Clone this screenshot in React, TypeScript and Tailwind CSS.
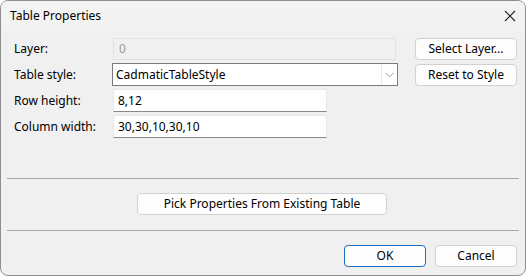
import React from 'react';

function Field({ width, value }: { width: string; value: string }) {
  return (
    <div
      className={`${width} h-[23px] bg-white border border-[#e8e8e8] border-b-[#888888] flex items-center px-[4px]`}
    >
      {value}
    </div>
  );
}

function Button({
  label,
  width,
  primary,
}: {
  label: string;
  width: string;
  primary?: boolean;
}) {
  return (
    <button
      className={`${width} h-[22px] rounded-[4px] bg-[#fdfdfd] border flex items-center justify-center ${
        primary ? 'border-[#1c6fc0]' : 'border-[#d1d1d1]'
      }`}
    >
      {label}
    </button>
  );
}

export default function App() {
  return (
    <div
      className="w-[526px] h-[276px] bg-[#f0f0f0] border border-[#8f8f8f] rounded-[8px] overflow-hidden flex flex-col text-[12px] text-black"
      style={{ fontFamily: '"Noto Sans", "Open Sans", sans-serif' }}
    >
      <div className="h-[30px] bg-[#f3f3f3] flex items-center justify-between pl-[9px] pr-[9px] shrink-0">
        <span>Table Properties</span>
        <svg width="12" height="12" viewBox="0 0 12 12">
          <path d="M1 1L11 11M11 1L1 11" stroke="#222" strokeWidth="1.1" />
        </svg>
      </div>

      <div className="flex flex-col pl-[13px] pt-[7px]">
        <div className="flex items-center h-[22px]">
          <span className="w-[99px]">Layer:</span>
          <div className="w-[283px] h-[22px] bg-[#f0f0f0] border border-[#e2e2e2] flex items-center px-[5px] text-[#9a9a9a]">
            0
          </div>
          <div className="ml-[19px]">
            <Button label="Select Layer..." width="w-[102px]" />
          </div>
        </div>

        <div className="flex items-center h-[23px] mt-[3px]">
          <span className="w-[98px]">Table style:</span>
          <div className="w-[286px] h-[23px] bg-white border border-[#7a7a7a] flex items-center">
            <span className="flex-1 pl-[3px]">CadmaticTableStyle</span>
            <div className="w-[16px] h-full border-l border-[#e8e8e8] flex items-center justify-center">
              <svg width="9" height="6" viewBox="0 0 9 6">
                <path d="M0.5 0.8L4.5 4.8L8.5 0.8" stroke="#9a9a9a" fill="none" />
              </svg>
            </div>
          </div>
          <div className="ml-[17px]">
            <Button label="Reset to Style" width="w-[102px]" />
          </div>
        </div>

        <div className="flex items-center mt-[3px]">
          <span className="w-[99px]">Row height:</span>
          <Field width="w-[214px]" value="8,12" />
        </div>

        <div className="flex items-center mt-[3px]">
          <span className="w-[99px]">Column width:</span>
          <Field width="w-[214px]" value="30,30,10,30,10" />
        </div>
      </div>

      <div className="mx-[6px] mt-[40px] border-t border-[#a8a8a8]" />

      <div className="flex mt-[14px] pl-[136px]">
        <Button label="Pick Properties From Existing Table" width="w-[250px]" />
      </div>

      <div className="mx-[6px] mt-[15px] border-t border-[#a8a8a8]" />

      <div className="flex justify-end gap-[9px] pr-[8px] mt-[14px]">
        <Button label="OK" width="w-[82px]" primary />
        <Button label="Cancel" width="w-[82px]" />
      </div>
    </div>
  );
}
